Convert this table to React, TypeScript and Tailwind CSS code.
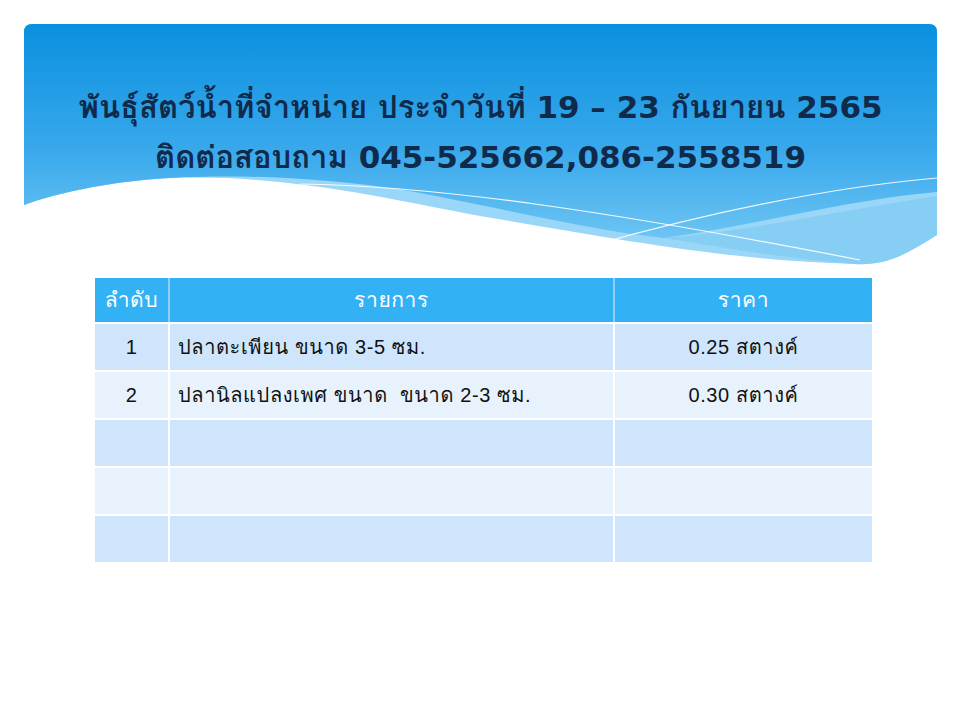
import React from 'react';

const rows = [
  { no: '1', item: 'ปลาตะเพียน ขนาด 3-5 ซม.', price: '0.25 สตางค์' },
  { no: '2', item: 'ปลานิลแปลงเพศ ขนาด  ขนาด 2-3 ซม.', price: '0.30 สตางค์' },
  { no: '', item: '', price: '' },
  { no: '', item: '', price: '' },
  { no: '', item: '', price: '' },
];

const Wave = () => (
  <svg className="absolute inset-0" width="913" height="245" viewBox="0 0 913 245">
    <defs>
      <linearGradient id="sky" x1="0" y1="0" x2="0" y2="1">
        <stop offset="0" stopColor="#0a90df" />
        <stop offset="0.6" stopColor="#3aa9ec" />
        <stop offset="1" stopColor="#6cc4f3" />
      </linearGradient>
    </defs>
    {/* light band under the main wave */}
    <path
      d="M0,8 Q0,0 8,0 H905 Q913,0 913,8 V211 C880,232 860,242 830,240 C700,236 600,216 456,192 C360,174 260,150 146,154 C80,158 30,170 0,181 Z"
      fill="#9ad6f7"
    />
    {/* main gradient */}
    <path
      d="M0,8 Q0,0 8,0 H905 Q913,0 913,8 V168 C820,176 740,200 640,214 C560,206 460,180 380,166 C300,154 220,150 146,154 C80,158 30,170 0,181 Z"
      fill="url(#sky)"
    />
    <path
      d="M640,214 C720,208 820,186 913,172 V211 C880,232 860,242 830,240 C760,234 700,224 640,214 Z"
      fill="#7fcaf4"
      opacity="0.7"
    />
    {/* thin white lines */}
    <path d="M276,160 C420,162 600,190 836,236" stroke="#ffffff" strokeWidth="1.2" fill="none" opacity="0.9" />
    <path d="M566,222 C680,190 800,164 913,154" stroke="#ffffff" strokeWidth="1.2" fill="none" opacity="0.9" />
  </svg>
);

export default function App() {
  return (
    <div className="w-[960px] h-[720px] bg-white pt-[24px] px-[24px] font-['Liberation_Sans',Loma,sans-serif]">
      <div className="relative w-[913px] h-[245px]">
        <Wave />
        <div className="relative flex flex-col items-center pt-[58px] text-[31px] font-bold leading-[50px] text-[#0f2a4a] font-['DejaVu_Sans',Loma,sans-serif]">
          <div>พันธุ์สัตว์น้ำที่จำหน่าย ประจำวันที่ 19 – 23 กันยายน 2565</div>
          <div>ติดต่อสอบถาม 045-525662,086-2558519</div>
        </div>
      </div>

      <div className="ml-[71px] mt-[9px] w-[777px]">
        <div className="grid grid-cols-[75px_445px_257px] bg-[#33b1f5] text-white text-[21px] tracking-[0.6px] h-[46px] border-b-2 border-white">
          <div className="flex items-center justify-center border-r-2 border-[#8fd0f8]">ลำดับ</div>
          <div className="flex items-center justify-center border-r-2 border-[#8fd0f8]">รายการ</div>
          <div className="flex items-center justify-center">ราคา</div>
        </div>
        {rows.map((r, i) => (
          <div
            key={i}
            className={`grid grid-cols-[75px_445px_257px] h-[48px] text-[20px] tracking-[0.6px] text-[#111] border-b-2 border-white ${
              i % 2 === 0 ? 'bg-[#cfe5fc]' : 'bg-[#e8f2fd]'
            }`}
          >
            <div className="flex items-center justify-center border-r-2 border-white">{r.no}</div>
            <div className="flex items-center pl-[8px] border-r-2 border-white whitespace-pre">{r.item}</div>
            <div className="flex items-center justify-center">{r.price}</div>
          </div>
        ))}
      </div>
    </div>
  );
}
